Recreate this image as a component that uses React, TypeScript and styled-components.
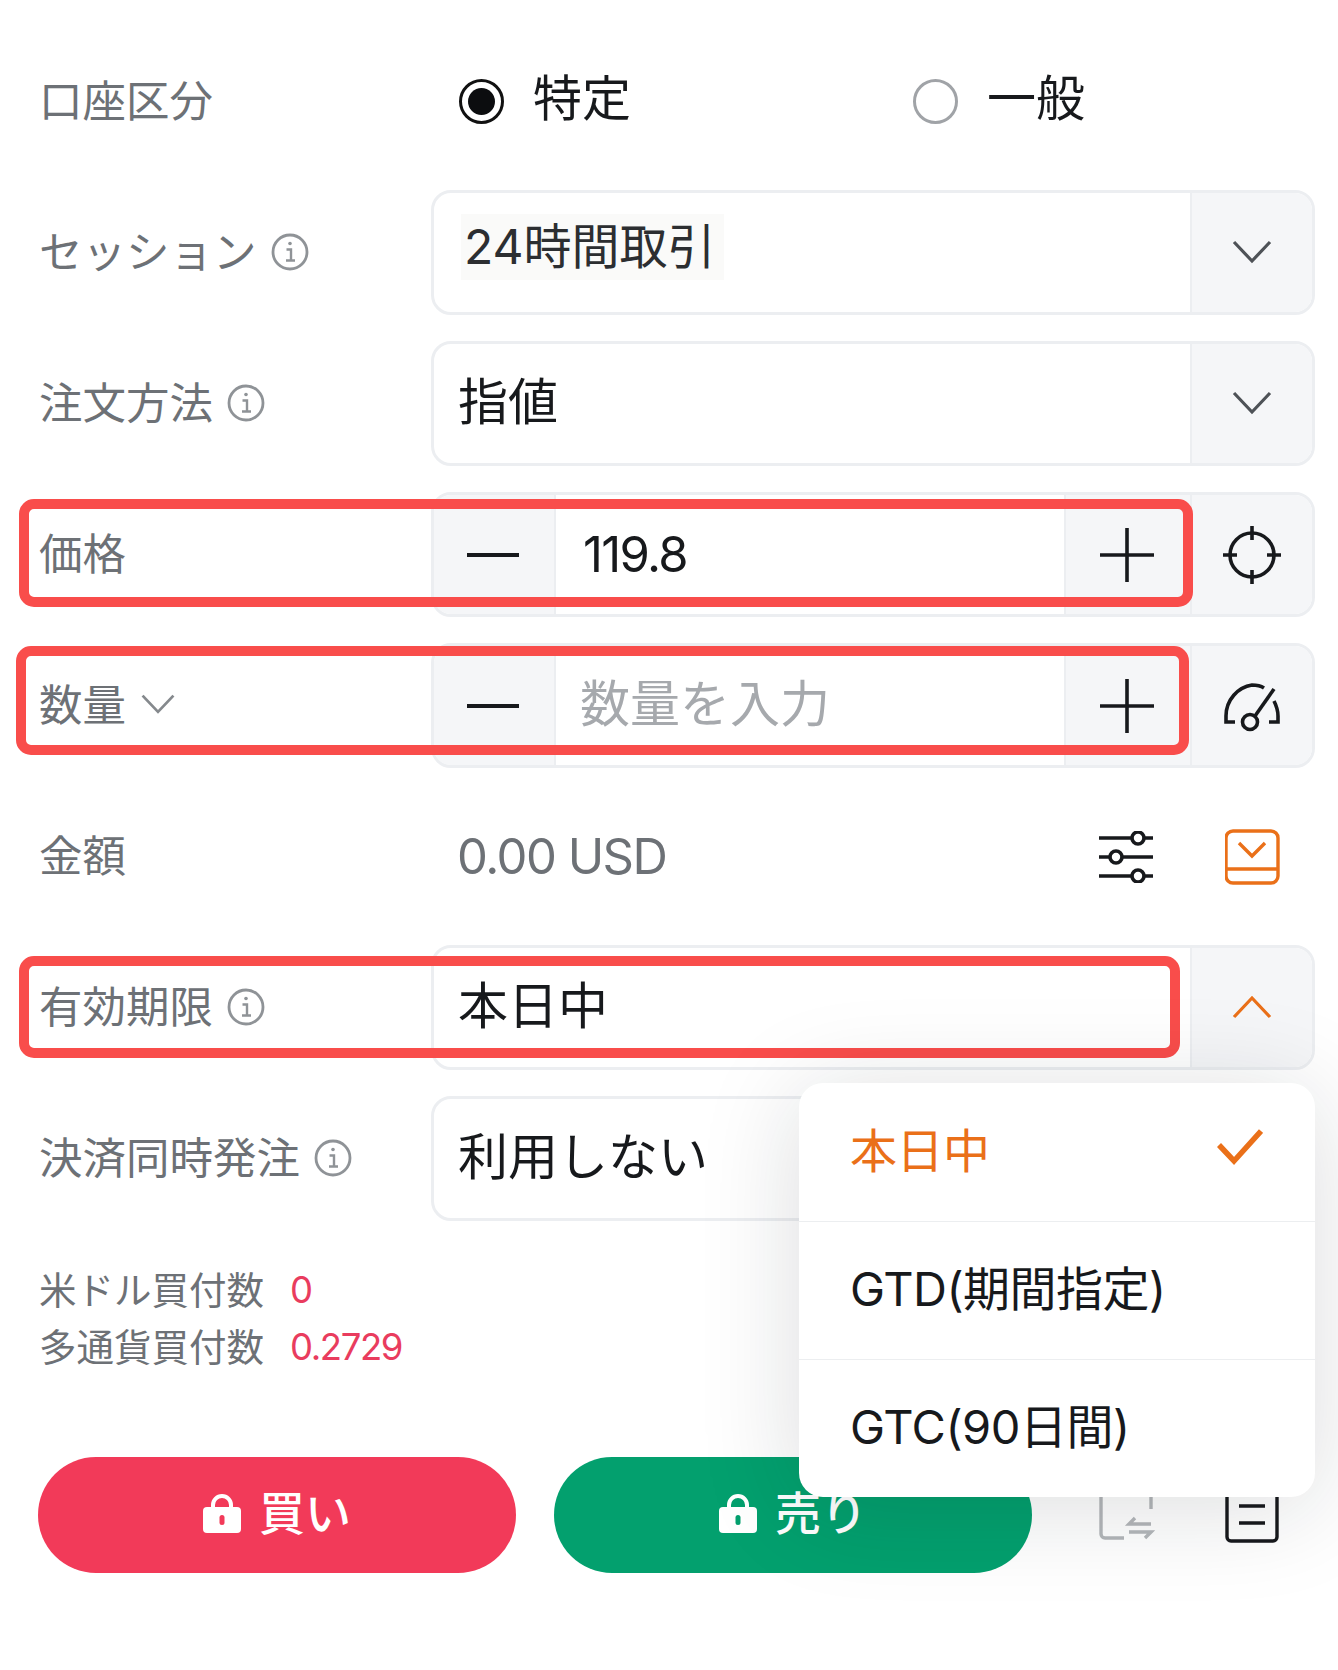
import styled, { createGlobalStyle } from 'styled-components'

const GlobalStyle = createGlobalStyle`
  html, body {
    margin: 0;
    background: #fff;
  }
  body {
    font-family: Inter, "Noto Sans CJK JP", "Noto Sans", sans-serif;
    -webkit-font-smoothing: antialiased;
  }
  * {
    box-sizing: border-box;
  }
`

const C = {
  text: '#17191c',
  label: '#6d7176',
  hint: '#a6a9ad',
  line: '#eceef1',
  cell: '#f5f6f8',
  orange: '#ea7019',
  red: '#f23a59',
  green: '#03a06e',
  mark: '#f94d4b',
}

const Chevron = ({ up, color = '#4e5257', size = 42 }: { up?: boolean; color?: string; size?: number }) => (
  <svg width={size} height={size} viewBox='0 0 42 42' fill='none'>
    <path
      d={up ? 'M3 30 21 11l18 19' : 'M3 10l18 19 18-19'}
      stroke={color}
      strokeWidth='3.2'
    />
  </svg>
)

const InfoIcon = () => (
  <svg width='38' height='38' viewBox='0 0 38 38' fill='none' stroke='#8f9397'>
    <circle cx='19' cy='19' r='17' strokeWidth='2.8' />
    <path d='M15.5 16.5H20V27M15 27.5h9' strokeWidth='2.4' />
    <circle cx='19' cy='10.5' r='1.8' fill='#8f9397' stroke='none' />
  </svg>
)

const MinusIcon = () => (
  <svg width='54' height='8' viewBox='0 0 54 8'>
    <rect y='2' width='52' height='4' fill={C.text} />
  </svg>
)

const PlusIcon = () => (
  <svg width='56' height='56' viewBox='0 0 56 56' fill='none' stroke={C.text} strokeWidth='3.6'>
    <path d='M0 28h54M27 1v54' />
  </svg>
)

const TargetIcon = () => (
  <svg width='60' height='60' viewBox='0 0 60 60' fill='none' stroke={C.text} strokeWidth='3.6'>
    <circle cx='30' cy='30' r='22' />
    <path d='M30 1v14M30 45v14M1 30h14M45 30h14' />
  </svg>
)

const GaugeIcon = () => (
  <svg width='60' height='52' viewBox='0 0 60 52' fill='none' stroke={C.text} strokeWidth='3.6'>
    <path d='M13 42H4V36C4 20 16 7 30 5c5 0 9 1 12 3' />
    <path d='M47 42h9V36c0-6-2-11-4-15' />
    <path d='M33 36 52 9' />
    <circle cx='28' cy='42' r='7.5' />
  </svg>
)

const SlidersIcon = () => (
  <svg width='56' height='52' viewBox='0 0 56 52' fill='none' stroke={C.text} strokeWidth='3.6'>
    <path d='M0 7h32M46 7h8M0 26h10M24 26h30M0 45h32M46 45h8' />
    <circle cx='39' cy='7' r='6' />
    <circle cx='17' cy='26' r='6' />
    <circle cx='39' cy='45' r='6' />
  </svg>
)

const MarginIcon = () => (
  <svg width='56' height='56' viewBox='0 0 56 56' fill='none' stroke={C.orange} strokeWidth='3.4'>
    <rect x='1' y='2' width='52' height='52' rx='7' />
    <path d='M1 40h52M14 14l13 13 13-13' />
  </svg>
)

const SwapIcon = () => (
  <svg width='56' height='56' viewBox='0 0 56 56' fill='none' stroke='#b4b7ba' strokeWidth='3.4'>
    <path d='M2 2v45a4 4 0 0 0 4 4h19M52 2v20' />
    <path d='M52 37H30l6-6M30 45h22l-6 6' />
  </svg>
)

const ListIcon = () => (
  <svg width='56' height='56' viewBox='0 0 56 56' fill='none' stroke={C.text} strokeWidth='3.4'>
    <rect x='2' y='2' width='50' height='52' rx='4' />
    <path d='M14 19h26M14 36h26' />
  </svg>
)

const LockIcon = () => (
  <svg width='38' height='40' viewBox='0 0 38 40'>
    <path d='M10 18v-6a9 9 0 0 1 18 0v6' fill='none' stroke='#fff' strokeWidth='4' />
    <rect y='14' width='38' height='26' rx='4' fill='#fff' />
    <rect x='16.5' y='22' width='5' height='10' rx='2.5' fill='currentColor' />
  </svg>
)

const CheckIcon = () => (
  <svg width='46' height='38' viewBox='0 0 46 38' fill='none' stroke={C.orange} strokeWidth='5.5'>
    <path d='M2 17l15 16L44 3' />
  </svg>
)

const Page = styled.main`
  width: 1338px;
  height: 1670px;
  padding: 39px 23px 0 39px;
  display: flex;
  flex-direction: column;
  gap: 26px;
  overflow: hidden;
`

const Row = styled.div`
  position: relative;
  height: 125px;
  display: grid;
  grid-template-columns: 392px 1fr;
  align-items: center;
`

const Label = styled.div`
  display: flex;
  align-items: center;
  gap: 14px;
  padding-bottom: 2px;
  font-size: 43.5px;
  line-height: 60px;
  color: ${C.label};
`

const RadioGroup = styled.div`
  display: grid;
  grid-template-columns: 454px 1fr;
  padding-left: 28px;
`

const RadioItem = styled.div`
  display: flex;
  align-items: center;
  gap: 29px;
  font-size: 49px;
  line-height: 60px;
  color: ${C.text};
  & > span:last-child {
    margin-top: -5px;
  }
`

const RadioDot = styled.span<{ $on?: boolean }>`
  width: 45px;
  height: 45px;
  border-radius: 50%;
  border: 3px solid ${({ $on }) => ($on ? '#111' : '#a0a3a7')};
  display: grid;
  place-items: center;
  &::after {
    content: '';
    width: 27px;
    height: 27px;
    border-radius: 50%;
    background: ${({ $on }) => ($on ? '#0c0d0f' : 'transparent')};
  }
`

const Field = styled.div`
  height: 125px;
  display: flex;
  border: 3px solid ${C.line};
  border-radius: 20px;
  overflow: hidden;
  background: #fff;
`

const Cell = styled.div<{ $w?: number; $edge?: 'left' | 'right' }>`
  flex: 0 0 ${({ $w }) => $w ?? 122}px;
  display: grid;
  place-items: center;
  background: ${C.cell};
  ${({ $edge }) =>
    $edge === 'right'
      ? `border-right: 2px solid ${C.line};`
      : `border-left: 2px solid ${C.line};`}
`

const Value = styled.div<{ $placeholder?: boolean }>`
  flex: 1;
  display: flex;
  align-items: center;
  padding: 0 0 11px 24px;
  font-size: 50px;
  color: ${({ $placeholder }) => ($placeholder ? C.hint : C.text)};
`

const NumberValue = styled(Value)`
  padding: 0 0 0 27px;
  font-size: 49px;
  letter-spacing: -1.7px;
`

const SessionText = styled.span`
  margin-left: 3px;
  padding: 3px 8px 3px 3px;
  background: #fafaf9;
  color: #2c2e31;
  font-size: 48px;
  line-height: 60px;
`

const Amount = styled.div`
  display: flex;
  align-items: center;
  padding-left: 26px;
`

const AmountText = styled.div`
  flex: 1;
  font-size: 49px;
  letter-spacing: -1.5px;
  color: ${C.label};
`

const PlainCell = styled.div<{ $w: number }>`
  flex: 0 0 ${({ $w }) => $w}px;
  display: grid;
  place-items: center;
`

const Mark = styled.div<{ $left: number; $top: number; $w: number; $h: number }>`
  position: absolute;
  left: ${({ $left }) => $left}px;
  top: ${({ $top }) => $top}px;
  width: ${({ $w }) => $w}px;
  height: ${({ $h }) => $h}px;
  border: 10px solid ${C.mark};
  border-radius: 15px;
  pointer-events: none;
`

const Menu = styled.div`
  position: absolute;
  z-index: 3;
  top: 138px;
  right: 0;
  width: 516px;
  border-radius: 24px;
  background: #fff;
  box-shadow: 0 10px 100px rgba(20, 24, 32, 0.15);
`

const MenuItem = styled.div<{ $active?: boolean }>`
  height: 138px;
  padding: 0 52px 10px 51px;
  display: flex;
  align-items: center;
  justify-content: space-between;
  font-size: 47px;
  letter-spacing: -0.5px;
  color: ${({ $active }) => ($active ? C.orange : C.text)};
  & + & {
    border-top: 1px solid #eceef0;
  }
`

const Stats = styled.div`
  display: grid;
  grid-template-columns: 252px 1fr;
  grid-auto-rows: 57px;
  align-items: center;
  margin-top: 14px;
  font-size: 37.5px;
  color: ${C.label};
  & > span:nth-child(odd) {
    margin-top: -4px;
  }
`

const StatValue = styled.span`
  margin-left: -1px;
  font-size: 36.5px;
  color: #e93c5e;
  letter-spacing: -1.4px;
`

const Actions = styled.div`
  display: flex;
  align-items: center;
  margin: 56px 0 0 -1px;
`

const TradeButton = styled.button<{ $color: string; $gap: number }>`
  flex: 0 0 478px;
  height: 116px;
  margin-right: ${({ $gap }) => $gap}px;
  border: 0;
  border-radius: 58px;
  display: flex;
  align-items: center;
  justify-content: center;
  gap: 18px;
  background: ${({ $color }) => $color};
  color: ${({ $color }) => $color};
  font-family: inherit;
  font-size: 46px;
  font-weight: 500;
  & > svg {
    margin-bottom: 5px;
  }
  & > span {
    margin-bottom: 10px;
    color: #fff;
  }
`

const ToolCell = styled(PlainCell)`
  height: 116px;
`

const App = () => (
  <>
    <GlobalStyle />
    <Page>
      <Row>
        <Label>口座区分</Label>
        <RadioGroup>
          <RadioItem>
            <RadioDot $on />
            <span>特定</span>
          </RadioItem>
          <RadioItem>
            <RadioDot />
            <span>一般</span>
          </RadioItem>
        </RadioGroup>
      </Row>

      <Row>
        <Label>
          セッション
          <InfoIcon />
        </Label>
        <Field>
          <Value>
            <SessionText>24時間取引</SessionText>
          </Value>
          <Cell $w={122}>
            <Chevron />
          </Cell>
        </Field>
      </Row>

      <Row>
        <Label>
          注文方法
          <InfoIcon />
        </Label>
        <Field>
          <Value>指値</Value>
          <Cell $w={122}>
            <Chevron />
          </Cell>
        </Field>
      </Row>

      <Row>
        <Label>価格</Label>
        <Field>
          <Cell $w={122} $edge='right'>
            <MinusIcon />
          </Cell>
          <NumberValue>119.8</NumberValue>
          <Cell $w={126}>
            <PlusIcon />
          </Cell>
          <Cell $w={122}>
            <TargetIcon />
          </Cell>
        </Field>
        <Mark $left={-20} $top={7} $w={1174} $h={108} />
      </Row>

      <Row>
        <Label>
          数量
          <Chevron color='#85898d' size={36} />
        </Label>
        <Field>
          <Cell $w={122} $edge='right'>
            <MinusIcon />
          </Cell>
          <Value $placeholder>数量を入力</Value>
          <Cell $w={126}>
            <PlusIcon />
          </Cell>
          <Cell $w={122}>
            <GaugeIcon />
          </Cell>
        </Field>
        <Mark $left={-23} $top={3} $w={1173} $h={109} />
      </Row>

      <Row>
        <Label>金額</Label>
        <Amount>
          <AmountText>0.00 USD</AmountText>
          <PlainCell $w={126}>
            <SlidersIcon />
          </PlainCell>
          <PlainCell $w={125}>
            <MarginIcon />
          </PlainCell>
        </Amount>
      </Row>

      <Row>
        <Label>
          有効期限
          <InfoIcon />
        </Label>
        <Field>
          <Value>本日中</Value>
          <Cell $w={122}>
            <Chevron up color={C.orange} />
          </Cell>
        </Field>
        <Mark $left={-20} $top={11} $w={1161} $h={102} />
        <Menu>
          <MenuItem $active>
            本日中
            <CheckIcon />
          </MenuItem>
          <MenuItem>GTD(期間指定)</MenuItem>
          <MenuItem>GTC(90日間)</MenuItem>
        </Menu>
      </Row>

      <Row>
        <Label>
          決済同時発注
          <InfoIcon />
        </Label>
        <Field>
          <Value>利用しない</Value>
        </Field>
      </Row>

      <Stats>
        <span>米ドル買付数</span>
        <StatValue>0</StatValue>
        <span>多通貨買付数</span>
        <StatValue>0.2729</StatValue>
      </Stats>

      <Actions>
        <TradeButton $color={C.red} $gap={38}>
          <LockIcon />
          <span>買い</span>
        </TradeButton>
        <TradeButton $color={C.green} $gap={32}>
          <LockIcon />
          <span>売り</span>
        </TradeButton>
        <ToolCell $w={126}>
          <SwapIcon />
        </ToolCell>
        <ToolCell $w={125}>
          <ListIcon />
        </ToolCell>
      </Actions>
    </Page>
  </>
)

export default App
